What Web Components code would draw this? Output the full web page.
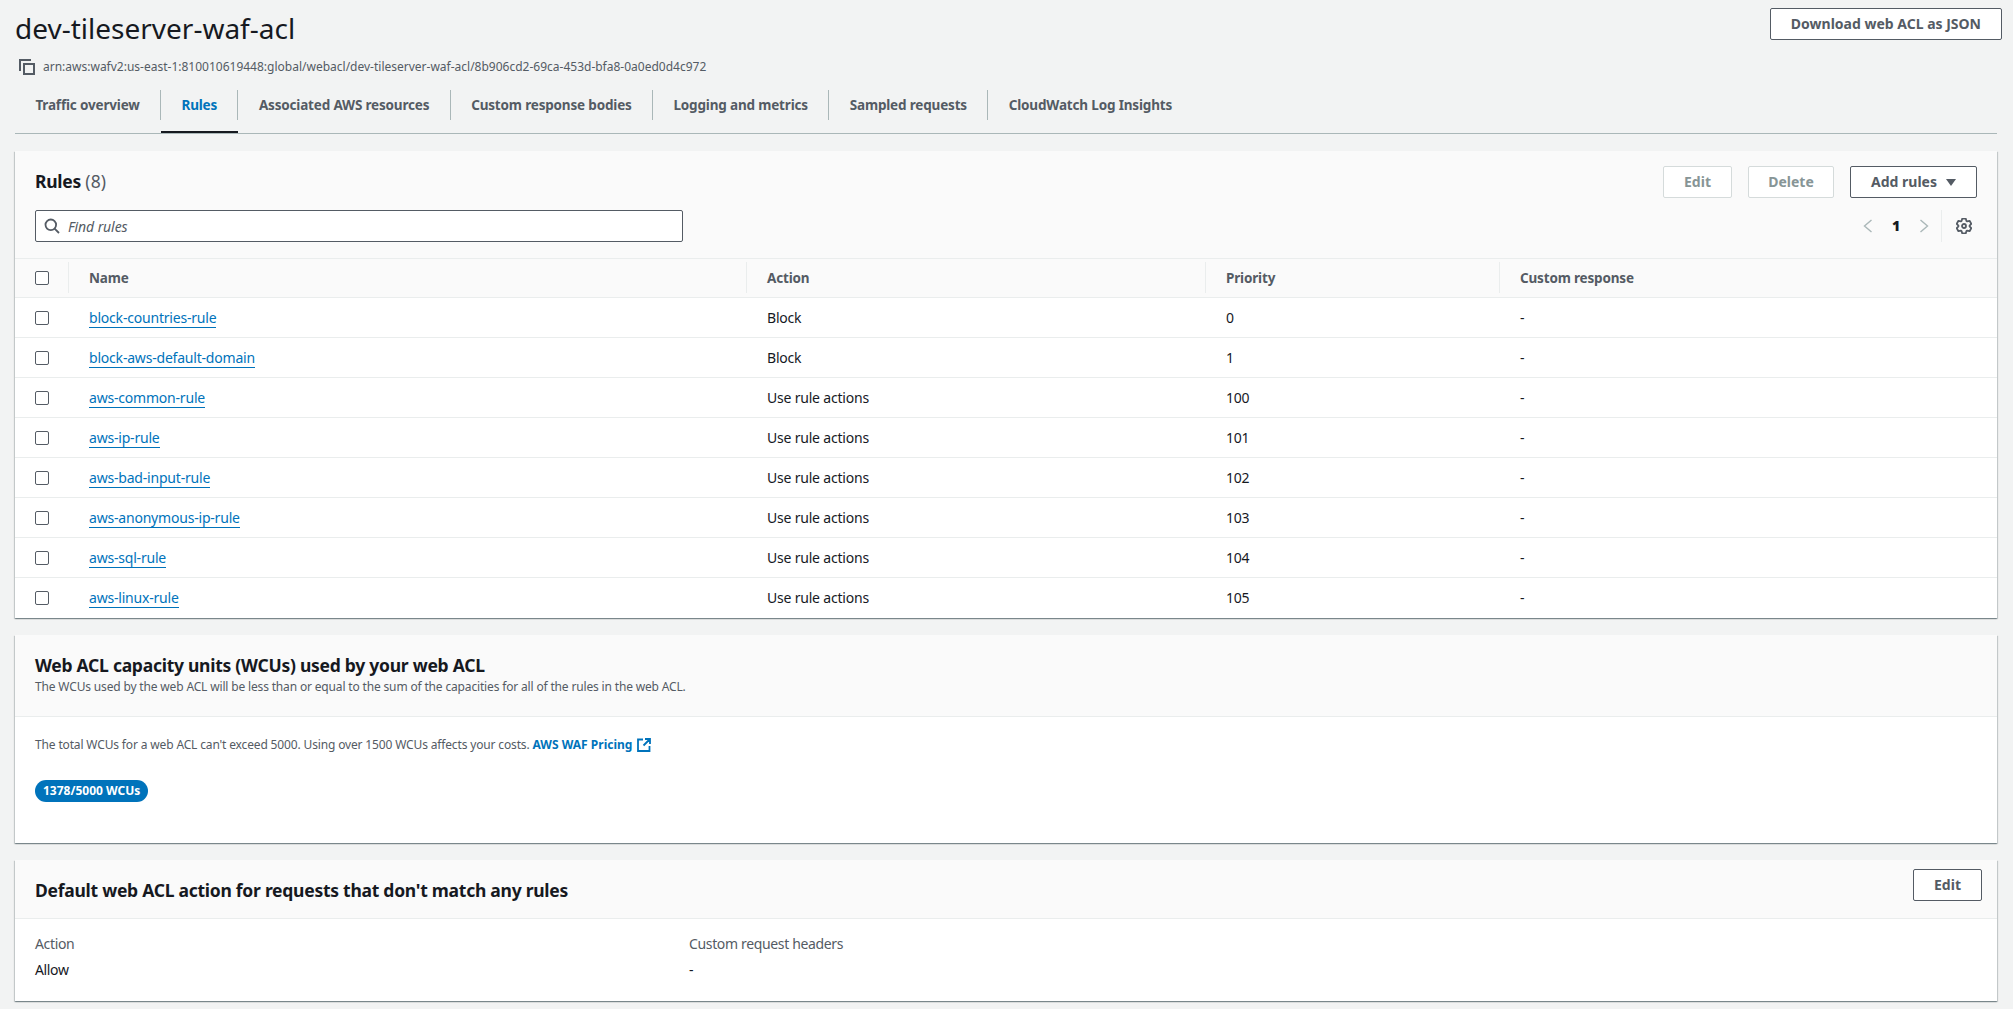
<!DOCTYPE html>
<html lang="en">
<head>
<meta charset="utf-8">
<title>dev-tileserver-waf-acl</title>
<style>
html, body { margin: 0; padding: 0; }
body { background: #f2f3f3; color: #16191f; font: 14px/20px "Noto Sans", sans-serif; letter-spacing: -.2px; overflow: hidden; height: 1009px; }
</style>
</head>
<body>
<waf-page>
	<waf-page-header title="dev-tileserver-waf-acl" arn="arn:aws:wafv2:us-east-1:810010619448:global/webacl/dev-tileserver-waf-acl/8b906cd2-69ca-453d-bfa8-0a0ed0d4c972"></waf-page-header>
	<waf-tabs active="Rules" items="Traffic overview|Rules|Associated AWS resources|Custom response bodies|Logging and metrics|Sampled requests|CloudWatch Log Insights"></waf-tabs>
	<waf-rules-table></waf-rules-table>
	<waf-card heading="Web ACL capacity units (WCUs) used by your web ACL" description="The WCUs used by the web ACL will be less than or equal to the sum of the capacities for all of the rules in the web ACL." style="--head-h:82px;--body-h:126px">
		<waf-capacity></waf-capacity>
	</waf-card>
	<waf-card heading="Default web ACL action for requests that don't match any rules" style="--head-h:59px;--body-h:82px;--pad-r:15px">
		<waf-button slot="actions" style="width:69px;padding:0">Edit</waf-button>
		<waf-default-action></waf-default-action>
	</waf-card>
</waf-page>
<script>
// six toothed cog, same shape as the table preferences icon
function gearPath(){
	let d = "";
	for (let i=0;i<6;i++){
		const a = -90+i*60;
		const pts = [[5.6,a-26],[7.6,a-13],[7.6,a+13],[5.6,a+26]];
		pts.forEach((p,j)=>{
			const x = 8+p[0]*Math.cos(p[1]*Math.PI/180);
			const y = 8+p[0]*Math.sin(p[1]*Math.PI/180);
			d += (i==0&&j==0?"M":"L")+x.toFixed(2)+" "+y.toFixed(2);
		});
	}
	return d+"Z";
}

const ICONS = {
	copy:`<svg width="16" height="16" viewBox="0 0 16 16" fill="none" stroke="#545b64" stroke-width="2"><path d="M1 12V1h11"/><rect x="5" y="5" width="10" height="10"/></svg>`,
	search:`<svg width="16" height="16" viewBox="0 0 16 16" fill="none" stroke="#545b64" stroke-width="1.800"><circle cx="6.800" cy="6.800" r="5.300"/><path d="M10.600 10.600 15 15"/></svg>`,
	left:`<svg width="16" height="16" viewBox="0 0 16 16" fill="none" stroke="#aab7b8" stroke-width="1.400"><path d="M11.500 2 4.500 8l7 6"/></svg>`,
	right:`<svg width="16" height="16" viewBox="0 0 16 16" fill="none" stroke="#aab7b8" stroke-width="1.400"><path d="M4.500 2l7 6-7 6"/></svg>`,
	gear:`<svg width="16" height="16" viewBox="0 0 16 16" fill="none" stroke="#545b64" stroke-width="1.800" stroke-linejoin="round"><path d="${gearPath()}"/><circle cx="8" cy="8" r="2"/></svg>`,
	external:`<svg width="14" height="14" viewBox="0 0 14 14" fill="none" stroke="#0073bb" stroke-width="1.800"><path d="M6 1.500H1v11.500h11.500V8M8 1h5v5M13 1 6.500 7.500"/></svg>`
};

class WafPage extends HTMLElement {
	constructor(){
		super();
		this.attachShadow({mode:"open"});
		this.shadowRoot.innerHTML = `
			<style>
				:host { display: block; padding: 0 16px 0 15px; }
				::slotted(*) { margin-bottom: 17px; }
			</style>
			<slot></slot>
		`;
	}
}

class WafButton extends HTMLElement {
	constructor(){
		super();
		this.attachShadow({mode:"open"});
		this.shadowRoot.innerHTML = `
			<style>
				:host {
					display: inline-flex;
					align-items: center;
					justify-content: center;
					box-sizing: border-box;
					height: 32px;
					padding: 0 20px;
					gap: 9px;
					border: 1px solid #545b64;
					border-radius: 2px;
					background: #fff;
					color: #545b64;
					font: bold 14px/20px "Noto Sans", sans-serif;
					letter-spacing: 0;
					white-space: nowrap;
				}
				:host([disabled]) {
					border-color: #d5dbdb;
					color: #879596;
				}
				i {
					display: none;
					width: 0;
					height: 0;
					border: 5.5px solid transparent;
					border-top: 7px solid #545b64;
					border-bottom: 0;
				}
				:host([caret]) i { display: block; }
			</style>
			<slot></slot><i></i>
		`;
	}
}

class WafPageHeader extends HTMLElement {
	constructor(){
		super();
		this.attachShadow({mode:"open"});
		this.shadowRoot.innerHTML = `
			<style>
				:host { display: block; height: 90px; margin-bottom: 0 !important; }
				.top { display: flex; justify-content: space-between; padding-top: 8px; margin-right: -5px; }
				h1 { margin: 0; font: 400 28px/40px "Noto Sans", sans-serif; letter-spacing: 0; color: #16191f; }
				.arn { display: flex; align-items: center; gap: 8px; margin: 9px 0 0 4px; color: #545b64; font-size: 12px; line-height: 20px; letter-spacing: 0; }
				svg { display: block; }
			</style>
			<div class="top">
				<h1>${this.getAttribute("title")}</h1>
				<waf-button>Download web ACL as JSON</waf-button>
			</div>
			<div class="arn">${ICONS.copy}<span>${this.getAttribute("arn")}</span></div>
		`;
	}
}

class WafTabs extends HTMLElement {
	constructor(){
		super();
		this.attachShadow({mode:"open"});
		const active = this.getAttribute("active");
		const tabs = this.getAttribute("items").split("|").map(t=>(
			`<div class="tab${t==active?" on":""}"><span>${t}</span></div>`
		)).join("");
		this.shadowRoot.innerHTML = `
			<style>
				:host { display: flex; height: 44px; box-sizing: border-box; border-bottom: 1px solid #aab7b8; margin-bottom: 17px !important; }
				.tab { height: 43px; box-sizing: border-box; }
				.tab span {
					display: block;
					height: 30px;
					line-height: 30px;
					padding: 0 20.4px;
					border-right: 1px solid #aab7b8;
					color: #545b64;
					font-size: 13.5px;
					font-weight: 700;
					letter-spacing: -.17px;
					white-space: nowrap;
				}
				.tab:last-child span { border-right: 0; }
				.tab.on { border-bottom: 2px solid #16191f; }
				.tab.on span { color: #0073bb; }
			</style>
			${tabs}
		`;
	}
}

class WafCheckbox extends HTMLElement {
	constructor(){
		super();
		this.attachShadow({mode:"open"});
		this.shadowRoot.innerHTML = `
			<style>
				:host { display: block; width: 14px; height: 14px; box-sizing: border-box; border: 1px solid #545b64; border-radius: 2px; background: #fff; }
			</style>
		`;
	}
}

class WafRulesTable extends HTMLElement {
	constructor(){
		super();
		this.attachShadow({mode:"open"});
		const rules = [
			["block-countries-rule","Block","0"],
			["block-aws-default-domain","Block","1"],
			["aws-common-rule","Use rule actions","100"],
			["aws-ip-rule","Use rule actions","101"],
			["aws-bad-input-rule","Use rule actions","102"],
			["aws-anonymous-ip-rule","Use rule actions","103"],
			["aws-sql-rule","Use rule actions","104"],
			["aws-linux-rule","Use rule actions","105"]
		];
		const rows = rules.map(r=>`
			<div class="row">
				<div class="c check"><waf-checkbox></waf-checkbox></div>
				<div class="c"><a>${r[0]}</a></div>
				<div class="c">${r[1]}</div>
				<div class="c">${r[2]}</div>
				<div class="c">-</div>
			</div>`).join("");
		this.shadowRoot.innerHTML = `
			<style>
				:host {
					display: block;
					background: #fff;
					box-shadow: 0 1px 1px 0 rgba(0,28,36,.3), 1px 1px 1px 0 rgba(0,28,36,.15), -1px 1px 1px 0 rgba(0,28,36,.15);
				}
				.head { background: #fafafa; height: 108px; box-sizing: border-box; padding: 15px 20px 0; border-bottom: 1px solid #eaeded; }
				.line { display: flex; justify-content: space-between; align-items: center; }
				h2 { margin: 0 0 2px; font: 700 17.5px/30px "Noto Sans", sans-serif; letter-spacing: -.25px; color: #16191f; }
				h2 span { font-weight: 400; color: #545b64; letter-spacing: .1px; }
				.actions { display: flex; gap: 16px; }
				.tools { margin-top: 12px; align-items: flex-start; }
				.search { width: 648px; height: 32px; box-sizing: border-box; border: 1px solid #545b64; border-radius: 2px; background: #fff; display: flex; align-items: center; gap: 8px; padding-left: 8px; font-style: italic; color: #545b64; }
				.search span { padding-top: 1px; letter-spacing: -.1px; }
				.pager { display: flex; align-items: center; height: 32px; margin-right: 5px; color: #16191f; font-weight: 700; }
				.pager b { width: 40px; text-align: center; }
				.sep { width: 1px; height: 32px; background: #eaeded; margin: 0 14px 0 9px; }
				svg { display: block; }
				.row { display: grid; grid-template-columns: 53px 678px 459px 294px 1fr; height: 40px; align-items: center; border-bottom: 1px solid #eaeded; box-sizing: border-box; }
				.row:last-child { border-bottom: 0; }
				.row.th { background: #fafafa; height: 39px; color: #545b64; font-size: 13.5px; font-weight: 700; letter-spacing: -.17px; }
				.c { padding-left: 21px; white-space: nowrap; }
				.c.check { padding-left: 20px; }
				.th .c:not(.check) { position: relative; }
				.th .c:not(.check)::before { content: ""; position: absolute; left: 0; top: -6px; bottom: -5px; width: 1px; background: #eaeded; }
				a { color: #0073bb; border-bottom: 1px solid #0073bb; letter-spacing: -.2px; }
			</style>
			<div class="head">
				<div class="line">
					<h2>Rules <span>(8)</span></h2>
					<div class="actions">
						<waf-button disabled style="width:69px;padding:0">Edit</waf-button>
						<waf-button disabled style="width:86px;padding:0">Delete</waf-button>
						<waf-button caret style="width:127px;padding:0">Add rules</waf-button>
					</div>
				</div>
				<div class="line tools">
					<div class="search">${ICONS.search}<span>Find rules</span></div>
					<div class="pager">${ICONS.left}<b>1</b>${ICONS.right}<i class="sep"></i>${ICONS.gear}</div>
				</div>
			</div>
			<div class="row th">
				<div class="c check"><waf-checkbox></waf-checkbox></div>
				<div class="c">Name</div>
				<div class="c">Action</div>
				<div class="c">Priority</div>
				<div class="c">Custom response</div>
			</div>
			${rows}
		`;
	}
}

class WafCard extends HTMLElement {
	constructor(){
		super();
		this.attachShadow({mode:"open"});
		const desc = this.getAttribute("description");
		this.shadowRoot.innerHTML = `
			<style>
				:host {
					display: block;
					background: #fff;
					box-shadow: 0 1px 1px 0 rgba(0,28,36,.3), 1px 1px 1px 0 rgba(0,28,36,.15), -1px 1px 1px 0 rgba(0,28,36,.15);
				}
				.head { height: var(--head-h); box-sizing: border-box; display: flex; justify-content: space-between; align-items: flex-start; padding: 9px var(--pad-r,20px) 0 20px; background: #fafafa; border-bottom: 1px solid #eaeded; }
				.title { padding-top: 10px; }
				h2 { margin: 0; font: 700 17.5px/22px "Noto Sans", sans-serif; letter-spacing: -.26px; color: #16191f; }
				p { margin: 3px 0 0; font-size: 12px; line-height: 16px; letter-spacing: -.16px; color: #545b64; }
				.body { height: var(--body-h); box-sizing: border-box; padding: 0 20px; }
			</style>
			<div class="head">
				<div class="title"><h2>${this.getAttribute("heading")}</h2>${desc?`<p>${desc}</p>`:""}</div>
				<slot name="actions"></slot>
			</div>
			<div class="body"><slot></slot></div>
		`;
	}
}

class WafCapacity extends HTMLElement {
	constructor(){
		super();
		this.attachShadow({mode:"open"});
		this.shadowRoot.innerHTML = `
			<style>
				:host { display: block; padding-top: 18px; font-size: 12px; line-height: 20px; color: #545b64; }
				.note { display: flex; align-items: center; gap: 3px; white-space: nowrap; }
				.note span { letter-spacing: -.15px; }
				b { color: #0073bb; letter-spacing: 0; }
				svg { display: block; margin-left: 2px; }
				.badge { display: inline-block; margin-top: 25px; height: 22px; line-height: 22px; padding: 0 8px; border-radius: 11px; background: #0073bb; color: #fff; font-weight: 700; letter-spacing: 0; }
			</style>
			<div class="note"><span>The total WCUs for a web ACL can't exceed 5000. Using over 1500 WCUs affects your costs.</span><b>AWS WAF Pricing</b>${ICONS.external}</div>
			<div class="badge">1378/5000 WCUs</div>
		`;
	}
}

class WafDefaultAction extends HTMLElement {
	constructor(){
		super();
		this.attachShadow({mode:"open"});
		this.shadowRoot.innerHTML = `
			<style>
				:host { display: grid; grid-template-columns: 654px 1fr; padding-top: 15px; row-gap: 6px; color: #16191f; letter-spacing: -.35px; }
				.k { color: #545b64; }
			</style>
			<div class="k">Action</div><div class="k">Custom request headers</div>
			<div>Allow</div><div>-</div>
		`;
	}
}

customElements.define("waf-button",WafButton);
customElements.define("waf-page",WafPage);
customElements.define("waf-page-header",WafPageHeader);
customElements.define("waf-tabs",WafTabs);
customElements.define("waf-checkbox",WafCheckbox);
customElements.define("waf-rules-table",WafRulesTable);
customElements.define("waf-card",WafCard);
customElements.define("waf-capacity",WafCapacity);
customElements.define("waf-default-action",WafDefaultAction);
</script>
</body>
</html>
